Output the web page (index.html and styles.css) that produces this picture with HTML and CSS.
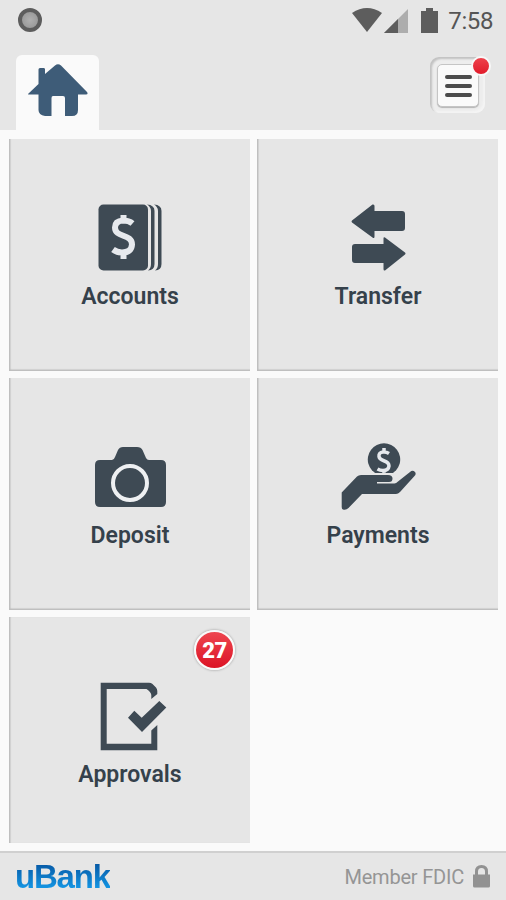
FILE: index.html
```html
<!DOCTYPE html>
<html lang="en">
<head>
  <meta charset="UTF-8" />
  <meta name="viewport" content="width=device-width, initial-scale=1.0" />
  <title>uBank</title>
  <link rel="stylesheet" href="styles.css">
</head>
<body>
  <div class="app">
    <header>
      <div class="status-bar">
        <span class="record"></span>
        <div class="status-icons">
          <svg class="wifi" width="30" height="24" viewBox="0 0 30 24"><path d="M0 5Q15-5 30 5L15 24Z" /></svg>
          <svg class="signal" width="24" height="24" viewBox="0 0 24 24"><path class="faint" d="M24 0V24H0Z" /><path d="M14 10V24H0Z" /></svg>
          <svg class="battery" width="17" height="25" viewBox="0 0 17 25"><path d="M5 0H12V3H17V25H0V3H5Z" /></svg>
          <span class="time">7:58</span>
        </div>
      </div>
      <div class="nav">
        <a class="home-tab">
          <svg width="60" height="53" viewBox="0 0 60 53"><path d="M0 30L10.500 20V5.500Q10.500 4 12 4H16Q17 4 17 5.500V10L27 1.500Q30-1 33 1.500L59 28Q60.500 30.500 58 30.500H50V46Q50 52 44 52H37V34Q37 32 35 32H25Q23.500 32 23.500 34V52H17Q10.500 51 10.500 46V30.500H1.500Q-.5 30.500 0 30Z" /></svg>
        </a>
        <div class="menu">
          <div class="menu-button"><i></i><i></i><i></i></div>
          <span class="dot"></span>
        </div>
      </div>
    </header>

    <main>
      <a class="tile">
        <svg viewBox="0 0 81 78">
          <rect x="9.500" y="5.500" width="49.500" height="66" rx="5" />
          <path d="M58 5.500Q65.500 6 65.500 12V65Q65.500 71 59 71.500Q62 69 62 65V12Q62 8 58 5.500ZM65 5.500Q72.500 6 72.500 12V65Q72.500 71 66 71.500Q69 69 69 65V12Q69 8 65 5.500Z" />
          <path class="dollar" d="M43.500 24.500Q40 21.500 34 21.500Q26 22 26 28.500C26 39 43 34.500 43 45.500Q42.500 53.500 33 53.500Q28 53.500 24 50.500M34.500 16V22M34.500 53V60" />
        </svg>
        <span>Accounts</span>
      </a>
      <a class="tile">
        <svg viewBox="0 0 81 78">
          <path d="M15 21.500L35.500 5.500Q37.500 5 37.500 7V12H65Q68 12 68 15V29Q68 32 65 32H37.500V37.500Q37.500 40 35.500 38.500L15 23.500Q14 22.500 15 21.500Z" />
          <path d="M68 53.500L48 38.500Q46.500 37.500 46.500 39.500V45H18Q15 45 15 48V61Q15 64 18 64H46.500V70Q46.500 72 48 71.500L68 55.500Q69 54.500 68 53.500Z" />
        </svg>
        <span>Transfer</span>
      </a>
      <a class="tile">
        <svg viewBox="0 0 81 78">
          <path d="M11 22H23Q25 22 26 19L29 12Q30.500 9 34 9H48Q52 9 53.500 12L57 20Q58 22 60 22H72Q77 22 77 27V64Q77 69 72 69H11Q6 69 6 64V27Q6 22 11 22Z" />
          <circle class="lens" cx="41" cy="45" r="17" />
        </svg>
        <span>Deposit</span>
      </a>
      <a class="tile">
        <svg viewBox="0 0 81 78">
          <path d="M41 36.500A16.200 16.200 0 1 1 53 36.500Z" />
          <path class="dollar small" d="M52 15.500Q49 13.500 46 14Q41.500 14.500 42 18.500C42.500 24 52 21.500 52 28Q51.500 32.500 46 32.500Q43 32.500 40.500 31M47 10V15M47 31V36.500" />
          <path class="gap" d="M38 36H57" />
          <path d="M4.700 54.500L20 38.500Q21.500 37 24 37H51Q55.500 37 55.500 40.500Q55.500 44 52 44H40V45.500H57.500Q59 45.500 61 43.500L73 34Q75.500 31.500 78 34Q79.500 36 77.500 38L63 54Q61 56 59 56H25L11.500 70Q9 72.500 6 71.500Q4.700 71 4.700 69Z" />
        </svg>
        <span>Payments</span>
      </a>
      <a class="tile last">
        <svg viewBox="0 0 81 78">
          <path d="M11.700 5.700H60Q62 5.700 63.500 7L67 10.500Q68.300 12 68.300 14V17L62.300 22V18Q62 15 57.500 12H17.700V66.700H62.300V53.500L68.300 48V73.300H11.700Z" />
          <path d="M39 40.700L45.300 33.700L52.700 40.700L70.300 24L77.300 30.500L53 55Z" />
        </svg>
        <span>Approvals</span>
        <b class="badge">27</b>
      </a>
    </main>

    <footer>
      <div class="brand">uBank</div>
      <div class="member">
        <span>Member FDIC</span>
        <svg width="17" height="23" viewBox="0 0 17 23"><path class="shackle" d="M3.500 11V6.500Q3.500 1.500 8.500 1.500T13.500 6.500V11" /><path d="M0 9.500H17V21Q17 22.500 15.500 22.500H1.500Q0 22.500 0 21Z" /></svg>
      </div>
    </footer>
  </div>
</body>
</html>
```
FILE: styles.css
```css
* {
  box-sizing: border-box;
}
body {
  margin: 0;
  font-family: Roboto, sans-serif;
  background: #fafafa;
}
svg {
  display: block;
}
.app {
  width: 506px;
  height: 900px;
  display: flex;
  flex-direction: column;
  overflow: hidden;
}
header {
  height: 130px;
  background: #e6e6e6;
  display: flex;
  flex-direction: column;
}
.status-bar {
  height: 42px;
  padding: 0 13px 0 18px;
  display: flex;
  align-items: center;
  justify-content: space-between;
}
.record {
  width: 24px;
  height: 24px;
  margin-top: -2px;
  border: 4px solid #5d5d5d;
  border-radius: 50%;
  background: radial-gradient(#b0b0b0, #929292);
}
.status-icons {
  display: flex;
  align-items: center;
  fill: #5d5d5d;
}
.wifi {
  margin: -2px 2px 0 0;
}
.signal {
  margin: -1px 13px 0 0;
}
.signal .faint {
  fill: #adadad;
}
.battery {
  margin: -2px 10px 0 0;
}
.time {
  font-size: 24px;
  line-height: 28px;
  letter-spacing: -0.4px;
  color: #555;
}
.nav {
  flex: 1;
  padding: 13px 21px 0 16px;
  display: flex;
  justify-content: space-between;
}
.home-tab {
  width: 83px;
  height: 75px;
  padding: 9px 0 0 12px;
  border-radius: 6px 6px 0 0;
  background: #fafafa;
}
.home-tab svg {
  fill: #3e5c78;
}
.menu {
  position: relative;
  width: 55px;
  height: 56px;
  margin-top: 2px;
  padding: 7px 6px 6px 7px;
  border-radius: 9px;
  background: #ededed;
  box-shadow: inset 2px 2px 2px #c2c2c2, inset -2px -2px 2px #f4f4f4;
}
.menu-button {
  width: 42px;
  height: 43px;
  border: 1px solid #c5c5c5;
  border-radius: 5px;
  background: #fafafa;
  box-shadow: 0 1px 1px #b5b5b5;
  display: flex;
  flex-direction: column;
  align-items: center;
  justify-content: center;
  gap: 5px;
}
.menu-button i {
  width: 27px;
  height: 4px;
  border-radius: 2px;
  background: #4c4c4c;
}
.dot {
  position: absolute;
  top: -1px;
  right: -6px;
  width: 20px;
  height: 20px;
  border: 2px solid #f8f8f8;
  border-radius: 50%;
  background: linear-gradient(#ee414b, #e11b2a);
}
main {
  flex: 1;
  padding: 9px 8px 0 9px;
  display: grid;
  grid-template-columns: 241px 241px;
  grid-template-rows: 232px 232px 226px;
  column-gap: 7px;
  row-gap: 7px;
}
.tile {
  position: relative;
  padding-top: 60px;
  background: #e6e6e6;
  box-shadow: inset 2px -2px 1px -0.500px #bdbdbd;
  display: flex;
  flex-direction: column;
  align-items: center;
  color: #35414b;
  font-size: 23px;
  font-weight: 600;
  line-height: 28px;
}
.tile.last {
  box-shadow: inset 2px 0 1px -0.500px #bdbdbd;
}
.tile span {
  padding-left: 1px;
}
.tile svg {
  width: 81px;
  height: 78px;
  margin-bottom: 6px;
  flex: none;
  fill: #3e4a54;
}
.tile .dollar {
  fill: none;
  stroke: #e6e9ed;
  stroke-width: 6;
}
.tile .small {
  stroke-width: 3.500;
}
.tile .gap {
  stroke: #e6e6e6;
  stroke-width: 2;
}
.tile .lens {
  fill: none;
  stroke: #eef0f2;
  stroke-width: 4;
}
.badge {
  position: absolute;
  top: 13px;
  right: 15px;
  width: 41px;
  height: 40px;
  border: 2px solid #fafafa;
  border-radius: 50%;
  background: linear-gradient(#ee4650, #dc1425);
  box-shadow: 0 0 2px 1px #c0c0c0;
  color: #fff;
  font-size: 22px;
  letter-spacing: -0.5px;
  line-height: 37px;
  text-align: center;
}
footer {
  height: 49px;
  padding: 0 16px 0 15px;
  border-top: 2px solid #d0d0d0;
  background: #e6e6e6;
  display: flex;
  align-items: center;
  justify-content: space-between;
}
.brand {
  font-family: "Liberation Sans", Arial, sans-serif;
  font-size: 33px;
  font-weight: bold;
  line-height: 38px;
  letter-spacing: -1.200px;
  background: linear-gradient(#0759a5 15%, #159be9 85%);
  -webkit-background-clip: text;
  background-clip: text;
  color: transparent;
}
.member {
  display: flex;
  align-items: center;
  gap: 9px;
  color: #959595;
  font-size: 20px;
  letter-spacing: -0.200px;
}
.member svg {
  margin-top: -1px;
  fill: #929292;
}
.member .shackle {
  fill: none;
  stroke: #929292;
  stroke-width: 3;
}
```
